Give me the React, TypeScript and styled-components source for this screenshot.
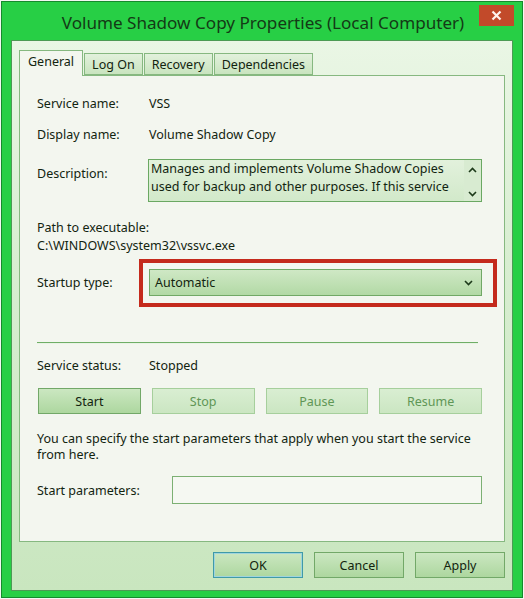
import React from "react";
import styled, { createGlobalStyle } from "styled-components";

const GlobalStyle = createGlobalStyle`
  html, body {
    margin: 0;
    padding: 0;
    background: #f4f8f2;
  }
  body {
    font-family: "Noto Sans", "Open Sans", sans-serif;
    color: #12240f;
  }
`;

const Window = styled.div`
  box-sizing: border-box;
  width: 522px;
  height: 597px;
  margin: 1px 0 0 1px;
  border: 1px solid #168a2c;
  background: #27cf45;
  display: flex;
  flex-direction: column;
`;

const TitleBar = styled.div`
  height: 39px;
  display: flex;
  align-items: center;
  justify-content: center;
  position: relative;
`;

const Title = styled.div`
  font-size: 17.1px;
  color: #143a16;
  padding-top: 2px;
  margin-left: 2px;
`;

const CloseButton = styled.div`
  position: absolute;
  top: 3px;
  right: 8px;
  width: 35px;
  height: 21px;
  background: #c24a2a;
  display: flex;
  align-items: center;
  justify-content: center;
`;

const Client = styled.div`
  flex: 1;
  margin: 0 9px 6px 9px;
  border: 1px solid #4c9a54;
  background: linear-gradient(180deg, #eaf6e5 0%, #d8eed1 40%, #c9e6bf 100%);
  padding: 9px 7px 12px 7px;
  display: flex;
  flex-direction: column;
`;

const TabStrip = styled.div`
  display: flex;
  align-items: flex-end;
  height: 25px;
  position: relative;
  z-index: 1;
`;

const Tab = styled.div<{ $active?: boolean }>`
  box-sizing: border-box;
  height: ${(p) => (p.$active ? "26px" : "22px")};
  margin-bottom: ${(p) => (p.$active ? "-1px" : "0")};
  padding: ${(p) => (p.$active ? "2px 8px 0 8px" : "2px 7px 0 7px")};
  font-size: 12.5px;
  line-height: 18px;
  border: 1px solid #86b880;
  border-bottom: ${(p) => (p.$active ? "none" : "1px solid #86b880")};
  margin-left: ${(p) => (p.$active ? "0" : "1px")};
  background: ${(p) =>
    p.$active ? "#f3f6ef" : "linear-gradient(180deg, #e2f1dc 0%, #c9e4bf 100%)"};
  color: #12240f;
`;

const Panel = styled.div`
  box-sizing: border-box;
  height: 467px;
  border: 1px solid #86b880;
  background: #f3f6ef;
  padding: 20px 22px 0 17px;
  display: flex;
  flex-direction: column;
  font-size: 12.5px;
`;

const Row = styled.div<{ $gap: number; $h?: number }>`
  display: grid;
  grid-template-columns: 112px 1fr;
  align-items: center;
  margin-top: ${(p) => p.$gap}px;
  min-height: ${(p) => p.$h ?? 16}px;
  line-height: 16px;
`;

const Label = styled.div<{ $top?: number }>`
  white-space: nowrap;
  align-self: ${(p) => (p.$top !== undefined ? "start" : "center")};
  padding-top: ${(p) => p.$top ?? 0}px;
`;

const Value = styled.div`
  white-space: nowrap;
`;

const TextBlock = styled.div<{ $gap: number; $lh?: number }>`
  margin-top: ${(p) => p.$gap}px;
  line-height: ${(p) => p.$lh ?? 16}px;
`;

const DescBox = styled.div`
  box-sizing: border-box;
  height: 43px;
  margin-left: -1px;
  border: 1px solid #6aa862;
  background: linear-gradient(180deg, #e2f1dc 0%, #d2e9ca 100%);
  display: flex;
`;

const DescText = styled.div`
  flex: 1;
  padding: 0 2px;
  line-height: 18px;
  overflow: hidden;
`;

const ScrollBar = styled.div`
  width: 17px;
  display: flex;
  flex-direction: column;
  justify-content: space-between;
  align-items: center;
  padding: 7px 0 4px;
  background: #d8ebd1;
`;

const HighlightFrame = styled.div`
  margin: -10px -15px -11px -10px;
  border: 4px solid #c42a1c;
  padding: 6px 11px 7px 6px;
`;

const Select = styled.div`
  box-sizing: border-box;
  height: 27px;
  border: 1px solid #71a866;
  background: linear-gradient(180deg, #cfe8c5 0%, #b2d9a5 100%);
  display: flex;
  align-items: center;
  justify-content: space-between;
  padding: 0 8px 0 5px;
`;

const Separator = styled.div<{ $gap: number }>`
  margin-top: ${(p) => p.$gap}px;
  height: 0;
  width: 441px;
  border-top: 1px solid #6fae66;
  border-bottom: 1px solid #e8f3e4;
`;

const ButtonRow = styled.div<{ $gap: number }>`
  margin-top: ${(p) => p.$gap}px;
  display: grid;
  grid-template-columns: repeat(4, 1fr);
  column-gap: 11px;
  margin-left: 1px;
`;

const Button = styled.div<{ $disabled?: boolean; $focused?: boolean }>`
  box-sizing: border-box;
  height: 26px;
  display: flex;
  align-items: center;
  justify-content: center;
  font-size: 12.5px;
  color: ${(p) => (p.$disabled ? "#5f9656" : "#12240f")};
  border: 1px solid ${(p) => (p.$focused ? "#3f9aa8" : p.$disabled ? "#a6cf9c" : "#72a868")};
  box-shadow: ${(p) => (p.$focused ? "inset 0 0 0 1px #9fd4dc" : "none")};
  background: ${(p) =>
    p.$disabled
      ? "linear-gradient(180deg, #d9eed2 0%, #cbe6c2 100%)"
      : "linear-gradient(180deg, #cbe7c1 0%, #add79f 100%)"};
`;

const ParamsRow = styled.div<{ $gap: number }>`
  margin-top: ${(p) => p.$gap}px;
  display: grid;
  grid-template-columns: 135px 1fr;
  align-items: center;
`;

const Input = styled.div`
  box-sizing: border-box;
  height: 28px;
  border: 1px solid #7cb073;
  background: #f5f8f2;
`;

const Footer = styled.div`
  display: flex;
  justify-content: flex-end;
  gap: 11px;
  margin-top: 10px;
`;

const FooterButton = styled(Button)`
  width: 90px;
`;

function Chevron({ up }: { up?: boolean }) {
  return (
    <svg width="9" height="6" viewBox="0 0 9 6">
      <path
        d={up ? "M1 5 L4.5 1.5 L8 5" : "M1 1 L4.5 4.5 L8 1"}
        fill="none"
        stroke="#1d3a1a"
        strokeWidth="1.6"
      />
    </svg>
  );
}

export default function App() {
  return (
    <>
      <GlobalStyle />
      <Window>
        <TitleBar>
          <Title>Volume Shadow Copy Properties (Local Computer)</Title>
          <CloseButton>
            <svg width="11" height="11" viewBox="0 0 11 11">
              <path d="M1.5 1.5 L9.5 9.5 M9.5 1.5 L1.5 9.5" stroke="#fff4ee" strokeWidth="2.2" />
            </svg>
          </CloseButton>
        </TitleBar>
        <Client>
          <TabStrip>
            <Tab $active>General</Tab>
            <Tab>Log On</Tab>
            <Tab>Recovery</Tab>
            <Tab>Dependencies</Tab>
          </TabStrip>
          <Panel>
            <Row $gap={0}>
              <Label>Service name:</Label>
              <Value>VSS</Value>
            </Row>
            <Row $gap={15}>
              <Label>Display name:</Label>
              <Value>Volume Shadow Copy</Value>
            </Row>
            <Row $gap={16} $h={43}>
              <Label $top={7}>Description:</Label>
              <DescBox>
                <DescText>
                  Manages and implements Volume Shadow Copies used for backup and other purposes. If this service
                </DescText>
                <ScrollBar>
                  <Chevron up />
                  <Chevron />
                </ScrollBar>
              </DescBox>
            </Row>
            <TextBlock $gap={17} $lh={18}>
              Path to executable:
              <br />
              C:\WINDOWS\system32\vssvc.exe
            </TextBlock>
            <Row $gap={14} $h={27}>
              <Label>Startup type:</Label>
              <HighlightFrame>
                <Select>
                  <span>Automatic</span>
                  <Chevron />
                </Select>
              </HighlightFrame>
            </Row>
            <Separator $gap={46} />
            <Row $gap={14}>
              <Label>Service status:</Label>
              <Value>Stopped</Value>
            </Row>
            <ButtonRow $gap={14}>
              <Button>Start</Button>
              <Button $disabled>Stop</Button>
              <Button $disabled>Pause</Button>
              <Button $disabled>Resume</Button>
            </ButtonRow>
            <TextBlock $gap={17}>
              You can specify the start parameters that apply when you start the service
              <br />
              from here.
            </TextBlock>
            <ParamsRow $gap={13}>
              <Label>Start parameters:</Label>
              <Input />
            </ParamsRow>
          </Panel>
          <Footer>
            <FooterButton $focused>OK</FooterButton>
            <FooterButton>Cancel</FooterButton>
            <FooterButton>Apply</FooterButton>
          </Footer>
        </Client>
      </Window>
    </>
  );
}
